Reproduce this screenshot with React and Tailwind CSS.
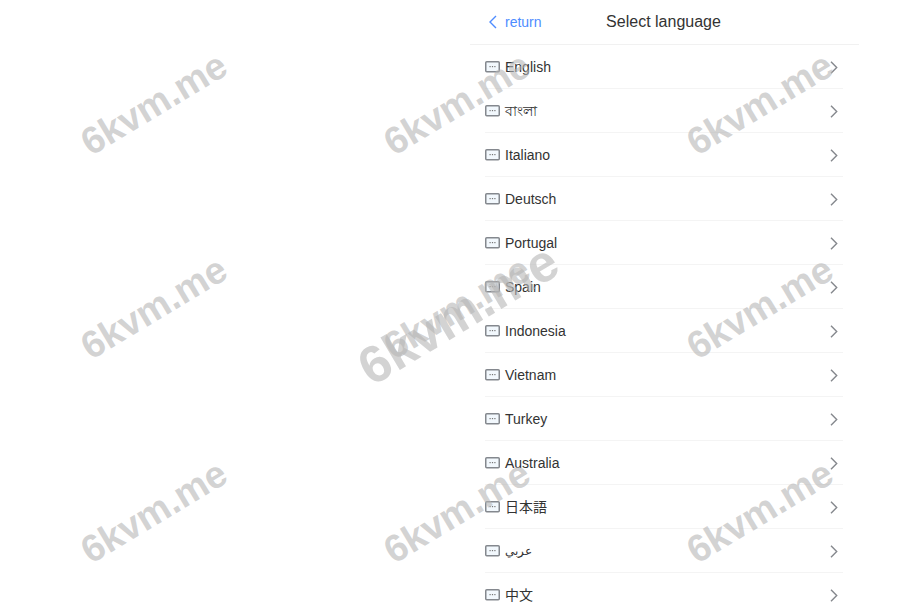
import React from 'react';

const languages = [
  { name: 'English' },
  { name: 'বাংলা' },
  { name: 'Italiano' },
  { name: 'Deutsch' },
  { name: 'Portugal' },
  { name: 'Spain' },
  { name: 'Indonesia' },
  { name: 'Vietnam' },
  { name: 'Turkey' },
  { name: 'Australia' },
  { name: '日本語' },
  { name: 'عربي', small: true },
  { name: '中文' },
];

// center points of the repeated watermark
const marks = [
  { left: 154, top: 104 }, { left: 457, top: 104 }, { left: 760, top: 104 },
  { left: 154, top: 308 }, { left: 457, top: 308 }, { left: 760, top: 308 },
  { left: 154, top: 512 }, { left: 457, top: 512 }, { left: 760, top: 512 },
];

function LangIcon() {
  return (
    <svg width="15" height="12" viewBox="0 0 15 12" fill="none" className="shrink-0">
      <rect x="0.75" y="0.75" width="13.5" height="10" rx="1" stroke="#84888e" strokeWidth="1.5" fill="#f2f8fd" />
      <rect x="4.5" y="5" width="1.2" height="1.2" fill="#777" />
      <rect x="6.9" y="5" width="1.2" height="1.2" fill="#777" />
      <rect x="9.3" y="5" width="1.2" height="1.2" fill="#777" />
    </svg>
  );
}

function Chevron() {
  return (
    <svg width="8" height="13" viewBox="0 0 8 13" fill="none" className="shrink-0">
      <path d="M1 0.8 L6.7 6.5 L1 12.2" stroke="#85888d" strokeWidth="1.4" />
    </svg>
  );
}

export default function App() {
  return (
    <div className="relative h-[611px] overflow-hidden bg-white font-['Liberation_Sans','Noto_Sans_CJK_JP',sans-serif] text-[#333]">
      <div className="ml-[470px] w-[389px]">
        {/* Header */}
        <div className="relative flex h-[45px] items-center justify-center border-b border-[#f1f1f1]">
          <span className="pr-[2px] text-base text-[#333]">Select language</span>
          <div className="absolute left-[19px] top-0 flex h-[44px] items-center gap-[8px] text-sm text-[#4e8cff]">
            <svg width="8" height="14" viewBox="0 0 8 14" fill="none">
              <path d="M7 1 L1 7 L7 13" stroke="#4e8cff" strokeWidth="1.4" />
            </svg>
            <span>return</span>
          </div>
        </div>

        {/* Rows */}
        <div className="ml-[15px] mr-[16px]">
          {languages.map((lang) => (
            <div key={lang.name} className="flex h-[44px] items-center justify-between border-b border-[#f4f4f4] pt-[1px]">
              <div className="flex items-center gap-[5px]">
                <LangIcon />
                <span className={lang.small ? 'text-xs' : 'text-sm'}>{lang.name}</span>
              </div>
              <div className="pr-[5px]">
                <Chevron />
              </div>
            </div>
          ))}
        </div>
      </div>

      {/* Watermark */}
      {marks.map((m) => (
        <div
          key={`${m.left}-${m.top}`}
          className="pointer-events-none absolute -translate-x-1/2 -translate-y-1/2 -rotate-[31deg] whitespace-nowrap text-[38px] font-bold text-[#b5b5b5]/60"
          style={{ left: m.left, top: m.top }}
        >
          6kvm.me
        </div>
      ))}
      {/* larger copy over the middle one */}
      <div className="pointer-events-none absolute left-[458px] top-[314px] -translate-x-1/2 -translate-y-1/2 -rotate-[31deg] whitespace-nowrap text-[52px] font-bold text-[#b5b5b5]/60">
        6kvm.me
      </div>
    </div>
  );
}
